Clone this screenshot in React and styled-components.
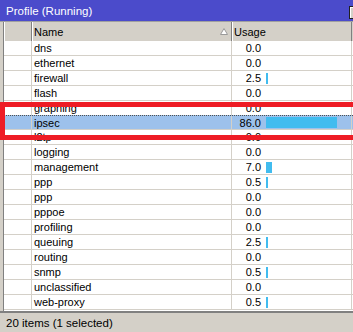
import React from 'react';
import styled, { createGlobalStyle } from 'styled-components';

const GlobalStyle = createGlobalStyle`
  html, body {
    margin: 0;
    padding: 0;
    overflow: hidden;
    background: #d4d0c8;
  }
  body {
    font-family: "Liberation Sans", Arial, sans-serif;
    font-size: 11px;
    color: #000;
  }
`;

const Window = styled.div`
  position: relative;
  width: 353px;
  height: 332px;
  display: flex;
  flex-direction: column;
  background: #d4d0c8;
  overflow: hidden;
`;

const TitleBar = styled.div`
  height: 21px;
  flex: none;
  background: #4b4bcb;
  border-bottom: 1px solid #a0a0a0;
  display: flex;
  align-items: center;
  justify-content: space-between;
  padding-left: 6px;
  color: #fff;
  font-size: 11.5px;
`;

const TitleButton = styled.div`
  width: 12px;
  height: 11px;
  margin-right: -10px;
  margin-top: 4px;
  background: #d4d0c8;
  border: 1px solid #202020;
  box-shadow: inset 1px 1px 0 #fff;
`;

const Frame = styled.div`
  flex: 1;
  min-height: 0;
  margin-left: 3px;
  border-left: 1px solid #808080;
  background: #fff;
  display: flex;
  flex-direction: column;
`;

const Cols = '28px 200px 120px';

const Header = styled.div`
  height: 19px;
  flex: none;
  display: grid;
  grid-template-columns: ${Cols};
  background: #d4d0c8;
  box-sizing: border-box;
`;

const HeadCell = styled.div`
  display: flex;
  align-items: center;
  justify-content: space-between;
  padding-left: 2px;
  padding-right: 3px;
  border-right: 1px solid #808080;
  box-shadow: inset 1px 0 0 #fff;
`;

const Rows = styled.div`
  flex: 1;
  min-height: 0;
  overflow: hidden;
`;

const Row = styled.div`
  height: 15px;
  box-sizing: border-box;
  display: grid;
  grid-template-columns: ${Cols};
  border-bottom: 1px solid #d4d0c8;
  background: ${p => (p.$selected ? '#9dc1eb' : '#fff')};
  border-top: ${p => (p.$selected ? '1px dotted #505050' : 'none')};
  margin-top: ${p => (p.$selected ? '-1px' : '0')};
`;

const Cell = styled.div`
  border-right: 1px solid #d4d0c8;
  display: flex;
  align-items: center;
  padding-left: 2px;
  white-space: nowrap;
  overflow: hidden;
  line-height: 14px;
`;

const UsageCell = styled(Cell)`
  padding-left: 0;
`;

const Value = styled.span`
  width: 29px;
  text-align: right;
  flex: none;
`;

const Bar = styled.div`
  height: 11px;
  margin-left: 5px;
  background: #41bcef;
  flex: none;
`;

const StatusBar = styled.div`
  height: 19px;
  flex: none;
  border-top: 2px solid #808080;
  display: flex;
  align-items: center;
  padding-left: 6px;
  font-size: 11.5px;
`;

const Highlight = styled.div`
  position: absolute;
  left: 0;
  top: 102px;
  width: 370px;
  height: 38px;
  box-sizing: border-box;
  border: 5px solid #ee1c25;
  pointer-events: none;
`;

const SortArrow = () => (
  <svg width="8" height="7" viewBox="0 0 8 7">
    <path d="M4 0.5 L7.5 6.5 L0.5 6.5 Z" fill="#fff" stroke="#9a9a9a" strokeWidth="1" />
  </svg>
);

// only the rows that fit in the list are drawn
const items = [
  ['dns', 0.0],
  ['ethernet', 0.0],
  ['firewall', 2.5],
  ['flash', 0.0],
  ['graphing', 0.0],
  ['ipsec', 86.0],
  ['l2tp', 0.0],
  ['logging', 0.0],
  ['management', 7.0],
  ['ppp', 0.5],
  ['ppp', 0.0],
  ['pppoe', 0.0],
  ['profiling', 0.0],
  ['queuing', 2.5],
  ['routing', 0.0],
  ['snmp', 0.5],
  ['unclassified', 0.0],
  ['web-proxy', 0.5],
];

const barWidth = v => {
  if (v <= 0) return 0;
  return Math.max(2, Math.round((v / 100) * 83));
};

export default function App() {
  return (
    <>
      <GlobalStyle />
      <Window>
        <TitleBar>
          <span>Profile (Running)</span>
          <TitleButton />
        </TitleBar>
        <Frame>
          <Header>
            <HeadCell />
            <HeadCell>
              <span>Name</span>
              <SortArrow />
            </HeadCell>
            <HeadCell>Usage</HeadCell>
          </Header>
          <Rows>
            {items.map(([name, v], i) => (
              <Row key={i} $selected={name === 'ipsec'}>
                <Cell />
                <Cell>{name}</Cell>
                <UsageCell>
                  <Value>{v.toFixed(1)}</Value>
                  {barWidth(v) > 0 && <Bar style={{ width: barWidth(v) }} />}
                </UsageCell>
              </Row>
            ))}
          </Rows>
        </Frame>
        <StatusBar>20 items (1 selected)</StatusBar>
        <Highlight />
      </Window>
    </>
  );
}
